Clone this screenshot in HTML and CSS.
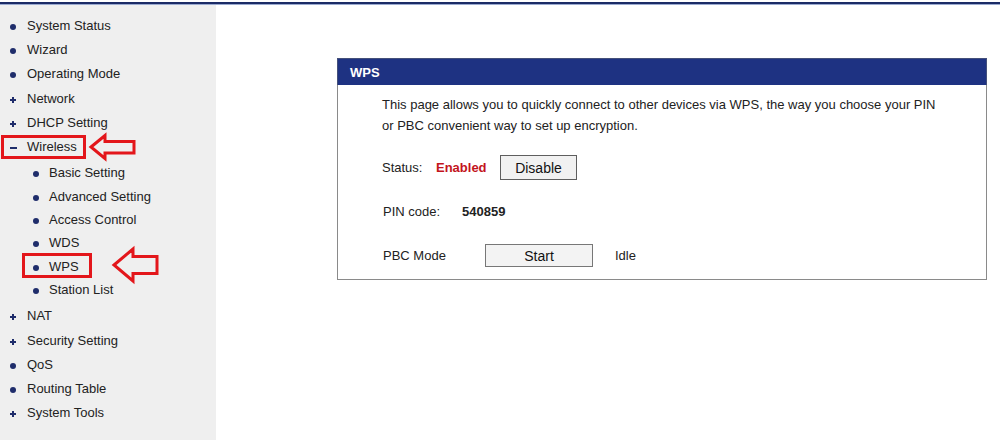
FILE: index.html
```html
<!DOCTYPE html>
<html lang="en">
<head>
  <meta charset="UTF-8">
  <title>WPS</title>
  <link rel="stylesheet" href="styles.css">
</head>
<body>

<div class="topline"></div>

<div class="layout">
  <!-- Menu -->
  <ul class="menu">
    <li class="dot">System Status</li>
    <li class="dot">Wizard</li>
    <li class="dot">Operating Mode</li>
    <li class="plus">Network</li>
    <li class="plus">DHCP Setting</li>
    <li class="minus">Wireless</li>
    <li class="sub">
      <ul>
        <li class="dot">Basic Setting</li>
        <li class="dot">Advanced Setting</li>
        <li class="dot">Access Control</li>
        <li class="dot">WDS</li>
        <li class="dot">WPS</li>
        <li class="dot">Station List</li>
      </ul>
    </li>
    <li class="plus">NAT</li>
    <li class="plus">Security Setting</li>
    <li class="dot">QoS</li>
    <li class="dot">Routing Table</li>
    <li class="plus">System Tools</li>
  </ul>

  <!-- Content -->
  <div class="content">
    <div class="panel">
      <div class="panel-head">WPS</div>
      <div class="panel-body">
        <p class="desc">This page allows you to quickly connect to other devices via WPS, the way you choose your PIN or PBC convenient way to set up encryption.</p>

        <div class="row row-status">
          <span class="label">Status:</span>
          <span class="state">Enabled</span>
          <button class="btn btn-disable">Disable</button>
        </div>

        <div class="row row-pin">
          <span class="label">PIN code:</span>
          <span class="value">540859</span>
        </div>

        <div class="row row-pbc">
          <span class="label">PBC Mode</span>
          <button class="btn btn-start">Start</button>
          <span class="idle">Idle</span>
        </div>
      </div>
    </div>
  </div>
</div>

<!-- annotation marks -->
<svg class="marks" width="1000" height="440" viewBox="0 0 1000 440">
  <g fill="none" stroke="#e3161b" stroke-width="3" stroke-linejoin="miter">
    <rect x="2.5" y="136.5" width="82" height="21"/>
    <path d="M91 147 L105 135.5 L105 141.5 L134 141.5 L134 153 L105 153 L105 158.5 Z"/>
    <rect x="23.5" y="254.5" width="67" height="22"/>
    <path d="M114 265 L133 249 L133 256.5 L157 256.5 L157 273.5 L133 273.5 L133 281 Z"/>
  </g>
</svg>

</body>
</html>
```

FILE: styles.css
```css
body {
  margin: 0;
  font-family: "Liberation Sans", Arial, sans-serif;
  font-size: 13px;
  color: #222;
  background: #fff;
  width: 1000px;
  height: 440px;
  overflow: hidden;
  position: relative;
}

.topline {
  margin-top: 2px;
  height: 2px;
  background: #1b2b66;
  border-bottom: 1px solid #9aaad0;
}

.layout {
  display: flex;
  height: 435px;
}

/* Menu */
.menu {
  list-style: none;
  margin: 0;
  padding: 9px 0 0 0;
  width: 216px;
  background: #efefef;
  flex-shrink: 0;
}

.menu li {
  height: 24.2px;
  line-height: 24.2px;
  padding-left: 27px;
  position: relative;
  white-space: nowrap;
}

.menu li.sub {
  height: auto;
  padding: 2px 0 3px 0;
}

.menu ul {
  list-style: none;
  margin: 0;
  padding: 0;
}

.menu .sub li {
  padding-left: 49px;
  height: 23.4px;
  line-height: 23.4px;
}

.menu li.dot::before {
  content: "";
  position: absolute;
  left: 10px;
  top: 10px;
  width: 6px;
  height: 6px;
  border-radius: 50%;
  background: #1f2d6b;
}

.menu .sub li.dot::before {
  left: 33px;
}

.menu li.plus::before,
.menu li.plus::after {
  content: "";
  position: absolute;
  background: #1f2d6b;
}

.menu li.plus::before {
  left: 10px;
  top: 12px;
  width: 6px;
  height: 2px;
}

.menu li.plus::after {
  left: 12px;
  top: 10px;
  width: 2px;
  height: 6px;
}

.menu li.minus::before {
  content: "";
  position: absolute;
  left: 10px;
  top: 12px;
  width: 7px;
  height: 2px;
  background: #1f2d6b;
}

/* Content */
.content {
  flex: 1;
  padding: 53px 0 0 121px;
}

.panel {
  width: 648px;
  border: 1px solid #8a8a8a;
  border-top: none;
}

.panel-head {
  background: #1e3282;
  color: #fff;
  font-weight: bold;
  height: 26px;
  line-height: 27px;
  padding-left: 12px;
  margin: 0 -1px;
  border: 1px solid #44507a;
  border-bottom: none;
}

.panel-body {
  padding: 9px 0 12px 44px;
}

.desc {
  margin: 0;
  line-height: 21px;
  width: 556px;
}

.row {
  display: flex;
  align-items: center;
}

.row-status {
  margin-top: 19px;
  height: 25px;
}

.row-pin {
  margin-top: 21px;
  height: 20px;
  padding-left: 1px;
}

.row-pbc {
  margin-top: 23px;
  height: 23px;
  padding-left: 1px;
}

.row-status .label {
  width: 54px;
}

.state {
  width: 64px;
  color: #c3141c;
  font-weight: bold;
}

.row-pin .label {
  width: 79px;
}

.value {
  font-weight: bold;
}

.row-pbc .label {
  width: 102px;
}

.btn {
  font-family: "Liberation Sans", Arial, sans-serif;
  font-size: 14px;
  color: #111;
  background: #f1f1f1;
  border: 1px solid #5e5e5e;
  border-radius: 0;
  padding: 0;
}

.btn-disable {
  width: 77px;
  height: 25px;
}

.btn-start {
  width: 108px;
  height: 23px;
  border-color: #777;
  background: #f3f3f3;
}

.idle {
  margin-left: 22px;
}

.marks {
  position: absolute;
  left: 0;
  top: 0;
  pointer-events: none;
}
```
